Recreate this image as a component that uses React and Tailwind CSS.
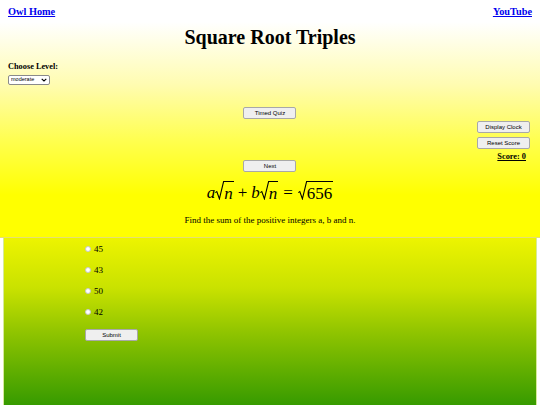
import React, { useState } from "react";

const Btn = ({ children, className = "" }) => (
  <button
    className={
      "w-[53px] h-[12px] bg-[#efefef] border border-[#a8a8a8] rounded-[2px] text-[6px] leading-none text-black font-['Liberation_Sans',Arial,sans-serif] " +
      className
    }
  >
    {children}
  </button>
);

// radical drawn as a small check mark with a bar over the radicand
const Sqrt = ({ children }) => (
  <span className="inline-flex items-stretch h-[19px]">
    <svg width="9" height="19" viewBox="0 0 9 19" className="shrink-0">
      <path d="M0.3 11.6 L1.8 10.6 L4.4 17.8 L8.6 0.6 L9 0.6" fill="none" stroke="black" strokeWidth="1.1" />
    </svg>
    <span className="border-t-[1.1px] border-black leading-none pt-[3px] pr-[1px] flex items-start">
      {children}
    </span>
  </span>
);

const App = () => {
  const [answer, setAnswer] = useState("");
  const options = ["45", "43", "50", "42"];

  return (
    <div className="min-h-[405px] w-[540px] overflow-hidden bg-white font-['Liberation_Serif','Times_New_Roman',serif] text-black">
      {/* upper part */}
      <div className="h-[238px] bg-[linear-gradient(to_bottom,#ffffff_0px,#ffffff_22px,#fffcb0_85px,#ffff50_140px,#ffff00_195px)] border-b border-[#e6e070]">
        <div className="flex justify-between px-[8px] pt-[7px] text-[10.3px] font-bold leading-none">
          <a href="#" className="text-[#0000ee] underline">Owl Home</a>
          <a href="#" className="text-[#0000ee] underline">YouTube</a>
        </div>

        <h1 className="text-center text-[20px] font-bold leading-none mt-[10px]">
          Square Root Triples
        </h1>

        <div className="px-[8px] mt-[16px]">
          <div className="text-[8.3px] font-bold leading-none">Choose Level:</div>
          <div className="relative mt-[3px] w-[42px] h-[10px]">
            <select className="block w-full h-full appearance-none bg-white border border-[#8a8a8a] rounded-[2px] text-[5.5px] leading-none pl-[2px] py-0 font-['Liberation_Sans',Arial,sans-serif]">
              <option>moderate</option>
              <option>easy</option>
              <option>hard</option>
            </select>
            <svg width="6" height="4" viewBox="0 0 6 4" className="absolute right-[3px] top-[3px] pointer-events-none">
              <path d="M0.7 0.8 L3 3 L5.3 0.8" fill="none" stroke="black" strokeWidth="1.1" />
            </svg>
          </div>
        </div>

        <div className="grid grid-cols-[1fr_auto_1fr] mt-[22px]">
          <div />
          <div className="flex flex-col items-center">
            <Btn>Timed Quiz</Btn>
            <Btn className="mt-[41px]">Next</Btn>
            <div className="mt-[9px] text-[17px] italic flex items-start leading-none">
              <span className="mt-[3px]">a</span>
              <Sqrt>n</Sqrt>
              <span className="not-italic mx-[4px] mt-[3px]">+</span>
              <span className="mt-[3px]">b</span>
              <Sqrt>n</Sqrt>
              <span className="not-italic mx-[5px] mt-[3px]">=</span>
              <Sqrt><span className="not-italic">656</span></Sqrt>
            </div>
            <p className="mt-[15px] text-[9px] leading-none whitespace-nowrap">
              Find the sum of the positive integers a, b and n.
            </p>
          </div>
          <div className="flex flex-col items-end pr-[10px] pt-[14px]">
            <Btn>Display Clock</Btn>
            <Btn className="mt-[4px]">Reset Score</Btn>
            <span className="mt-[4px] mr-[4px] text-[8.3px] font-bold underline leading-none">
              Score: 0
            </span>
          </div>
        </div>
      </div>

      {/* lower part */}
      <div className="mx-[3px] h-[170px] border-x border-[#d6ea9a] bg-[linear-gradient(to_bottom,#edf400_0px,#c9e200_50px,#8fc400_95px,#339900_170px)] pt-[6px] pl-[81px]">
        <div className="flex flex-col gap-[11px]">
          {options.map((o) => (
            <label key={o} className="flex items-center gap-[3px] text-[9px] leading-[10px] cursor-pointer">
              <span
                onClick={() => setAnswer(o)}
                className={
                  "w-[6px] h-[6px] rounded-full border border-[#c8c8c8] bg-white " +
                  (answer === o ? "ring-2 ring-inset ring-[#0075ff]" : "")
                }
              />
              <span>{o}</span>
            </label>
          ))}
        </div>
        <Btn className="mt-[12px] w-[52px]">Submit</Btn>
      </div>
    </div>
  );
};

export default App;
